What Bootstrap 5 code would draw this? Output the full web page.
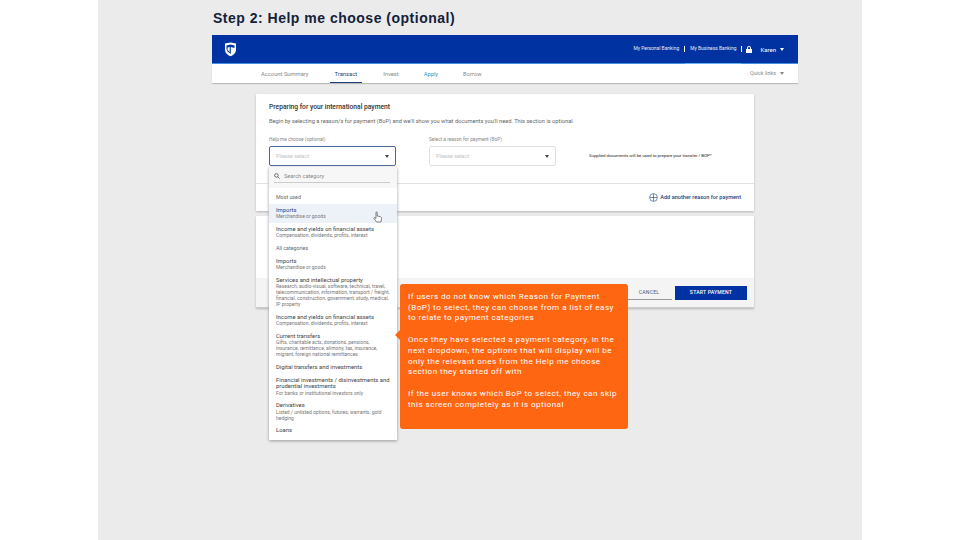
<!doctype html>
<html lang="en"><head><meta charset="utf-8"><title>Step 2</title>
<link href="https://cdn.jsdelivr.net/npm/bootstrap@5.3.0/dist/css/bootstrap.min.css" rel="stylesheet">
<style>
html,body{margin:0;height:540px;overflow:hidden;background:#fff}
body{font-family:Roboto,"Liberation Sans",sans-serif;color:#444}
.slide{width:764px;height:540px;margin-left:98px;background:#ebebeb;padding:9px 0 0 114px;position:relative}
.slide-title{font:700 14px/18px "Liberation Sans",sans-serif;letter-spacing:.5px;color:#14213a;margin:0 0 8px 1px}
.app{width:586px}
.topbar{height:29px;background:#0033a1;border-bottom:1px solid #3f8fe0;padding:0 14px 0 12px;color:#fff}
.topbar .tlink{font-size:4.9px;color:#e6ecf8;padding:0 5px}
.topbar .tlink.on{position:relative;margin-left:0}
.topbar .tlink.on::after{content:"";position:absolute;left:0;right:0;bottom:-11px;height:1px;background:#5fb2ee}
.sep{width:1px;height:6px;background:#fff}
.uname{font-size:6px;margin:0 0 0 8px}
.caret-d{width:0;height:0;border-left:2.5px solid transparent;border-right:2.5px solid transparent;border-top:3px solid currentColor}
.subnav{height:19px;background:#fff;box-shadow:0 1px 1px #bbb;padding:0 14px 0 45px;font-size:5.8px;color:#888}
.subnav .nitem{padding:0 4px;height:19px;line-height:20px;margin-right:17px}
.subnav .nitem.cur{color:#1d3f7c;border-bottom:1px solid #1d3f7c;padding:0 5px}
.subnav .nitem.apply{color:#2a9bc0}
.qlink{font-size:5.4px}
.panel{width:498px;margin-left:44px;background:#fff;box-shadow:0 1px 2px #b5b5b5}
.panel-a{height:117px;margin-top:11px;display:flex;flex-direction:column}
.panel-b{height:92px;margin-top:5px;display:flex;flex-direction:column;justify-content:flex-end}
.panel-body-a{flex:1;padding:9px 13px 0}
.h-pay{font-size:6.7px;font-weight:500;color:#333;line-height:9px;margin-bottom:5px}
.p-pay{font-size:5.7px;color:#666;line-height:8px;margin-bottom:12px;white-space:nowrap}
.flabel{font-size:4.8px;color:#888;line-height:6px;margin-bottom:3px}
.fsel{width:127px;height:20px;border:1px solid #e0e0e0;border-radius:2px;padding:0 6px;font-size:5.6px;color:#c4c4c4;background:#fff}
.fsel.act{border-color:#4b6a9c}
.fsel .caret-d{color:#444}
.gap-f{width:33px}
.fnote{font-size:4.3px;line-height:6px;color:#222;margin:16px 0 0 33px;white-space:nowrap}
.panel-foot{height:28px;border-top:1px solid #e2e2e2;padding:0 13px;font-size:5.6px;font-weight:500;color:#1d3f7c}
.panel-foot svg{margin-right:2px}
.foot-b{height:30px;background:#f4f4f4;padding:0 7px 0 0;border-bottom:1px solid #ccc}
.btn-c{width:46px;height:15px;font-size:5.1px;line-height:14px;color:#405a85;border-bottom:1px solid #999;text-align:center;letter-spacing:.2px}
.btn-s{width:72px;height:14px;padding:0;margin-left:3px;border:0;border-radius:0;background:#0033a1;color:#fff;font-size:5.1px;letter-spacing:.2px;font-weight:500}
.ddmenu{position:absolute;left:171px;top:167px;width:128px;height:273px;background:#fff;box-shadow:0 1px 3px #999;color:#555}
.dsearch{height:21px;background:#f7f7f7;padding:3px 7px 0 5px;font-size:5.6px;color:#888}
.dsearch-in{border-bottom:1px solid #ccc;height:13px;width:100%}
.dlist{padding-top:2.500px}
.dsec{color:#666;font-size:5.3px;line-height:6.500px;padding:3.250px 7px}
.ditem{padding:3.250px 7px}
.ditem b{display:block;font-weight:400;color:#444;font-size:5.9px;line-height:6.500px}
.ditem span{display:block;font-size:5px;color:#777;line-height:6px}
.ditem.hov{background:#edf2f9}
.ditem.hov b{color:#1d3f7c}
.hand{position:absolute;left:104px;top:44px}
.tip{position:absolute;left:302px;top:284px;width:228px;height:145px;background:#ff6612;border-radius:3px;padding:7px 8px;color:#fff;font-size:8.1px;line-height:10.700px;letter-spacing:.46px}
.tip::before{content:"";position:absolute;left:-5px;top:46px;border:5px solid transparent;border-left:0;border-right-color:#ff6612}
.tip p{margin:0 0 11px}
</style></head><body>
<div class="slide">
<h1 class="slide-title">Step 2: Help me choose (optional)</h1>
<div class="app">
  <div class="topbar d-flex align-items-center">
    <svg width="13" height="15" viewBox="0 0 13 15"><path d="M1 1.500 6.500.5 12 1.500V8c0 3-2.500 5-5.500 6.300C3.500 13 1 11 1 8Z" fill="#fff"/><path d="M2.500 3.500 6.500 2.600 10.500 3.500V6L6.800 5 6.800 12 3.500 9.500 2.500 7Z" fill="#0033a1"/><path d="M3.600 5.500 5.700 5V10L3.600 8Z" fill="#fff"/></svg>
    <div class="ms-auto d-flex align-items-center">
      <span class="tlink">My Personal Banking</span><span class="sep"></span>
      <span class="tlink on">My Business Banking</span><span class="sep"></span>
      <svg class="ms-1" width="6" height="7" viewBox="0 0 6 7"><path d="M1 3V2a2 2 0 0 1 4 0v1h1v4H0V3Zm1 0h2V2a1 1 0 0 0-2 0Z" fill="#fff"/></svg>
      <span class="uname">Karen</span><span class="caret-d ms-1"></span>
    </div>
  </div>
  <div class="subnav d-flex">
    <span class="nitem">Account Summary</span>
    <span class="nitem cur">Transact</span>
    <span class="nitem">Invest</span>
    <span class="nitem apply">Apply</span>
    <span class="nitem">Borrow</span>
    <span class="ms-auto d-flex align-items-center qlink"><span>Quick links</span><span class="caret-d ms-1"></span></span>
  </div>
  <div class="panel panel-a">
    <div class="panel-body-a">
      <div class="h-pay">Preparing for your international payment</div>
      <div class="p-pay">Begin by selecting a reason/s for payment (BoP) and we'll show you what documents you'll need. This section is optional.</div>
      <div class="d-flex">
        <div><div class="flabel">Help me choose (optional)</div>
          <div class="fsel act d-flex align-items-center justify-content-between"><span>Please select</span><span class="caret-d"></span></div></div>
        <div class="gap-f"></div>
        <div><div class="flabel">Select a reason for payment (BoP)</div>
          <div class="fsel d-flex align-items-center justify-content-between"><span>Please select</span><span class="caret-d"></span></div></div>
        <div class="fnote">Supplied documents will be used to prepare your transfer / BOP*</div>
      </div>
    </div>
    <div class="panel-foot d-flex align-items-center justify-content-end">
      <svg width="9" height="9" viewBox="0 0 9 9" fill="none" stroke="#1d3f7c" stroke-width=".6"><circle cx="4.500" cy="4.500" r="3.900"/><path d="M4.500 1v7M1 4.500h7"/></svg>
      <span>Add another reason for payment</span>
    </div>
  </div>
  <div class="panel panel-b">
    <div class="foot-b d-flex align-items-center justify-content-end">
      <span class="btn-c">CANCEL</span>
      <button class="btn btn-s" type="button">START PAYMENT</button>
    </div>
  </div>
</div>
<div class="ddmenu">
  <div class="dsearch"><div class="dsearch-in d-flex align-items-center gap-1">
    <svg width="6" height="6" viewBox="0 0 6 6" fill="none" stroke="#555" stroke-width=".8"><circle cx="2.400" cy="2.400" r="1.800"/><path d="M3.800 3.800 5.600 5.600"/></svg><span>Search category</span></div></div>
  <div class="dlist">
  <div class="dsec">Most used</div>
  <div class="ditem hov"><b>Imports</b><span>Merchandise or goods</span></div>
  <div class="ditem"><b>Income and yields on financial assets</b><span>Compensation, dividends, profits, interest</span></div>
  <div class="dsec">All categories</div>
  <div class="ditem"><b>Imports</b><span>Merchandise or goods</span></div>
  <div class="ditem"><b>Services and intellectual property</b><span>Research, audio-visual, software, technical, travel, telecommunication, information, transport / freight, financial, construction, government, study, medical, IP property</span></div>
  <div class="ditem"><b>Income and yields on financial assets</b><span>Compensation, dividends, profits, interest</span></div>
  <div class="ditem"><b>Current transfers</b><span>Gifts, charitable acts, donations, pensions, insurance, remittance, alimony, tax, insurance, migrant, foreign national remittances</span></div>
  <div class="ditem"><b>Digital transfers and investments</b></div>
  <div class="ditem"><b>Financial investments / disinvestments and prudential investments</b><span>For banks or institutional investors only</span></div>
  <div class="ditem"><b>Derivatives</b><span>Listed / unlisted options, futures, warrants, gold hedging</span></div>
  <div class="ditem"><b>Loans</b></div>
  </div>
  <svg class="hand" width="10" height="12" viewBox="0 0 10 12"><path d="M3 1.500c0-.8 1.200-.8 1.200 0V5l3 .6c1 .2 1.500 1 1.300 2L8 11H3.500L1 7.500c-.4-.8.500-1.300 1.100-.7L3 7.500Z" fill="#fff" stroke="#333" stroke-width=".6"/></svg>
</div>
<div class="tip">
  <p>If users do not know which Reason for Payment (BoP) to select, they can choose from a list of easy to relate to payment categories</p>
  <p>Once they have selected a payment category, in the next dropdown, the options that will display will be only the relevant ones from the Help me choose section they started off with</p>
  <p>If the user knows which BoP to select, they can skip this screen completely as it is optional</p>
</div>
</div>
<script src="https://cdn.jsdelivr.net/npm/bootstrap@5.3.0/dist/js/bootstrap.bundle.min.js"></script>
</body></html>
